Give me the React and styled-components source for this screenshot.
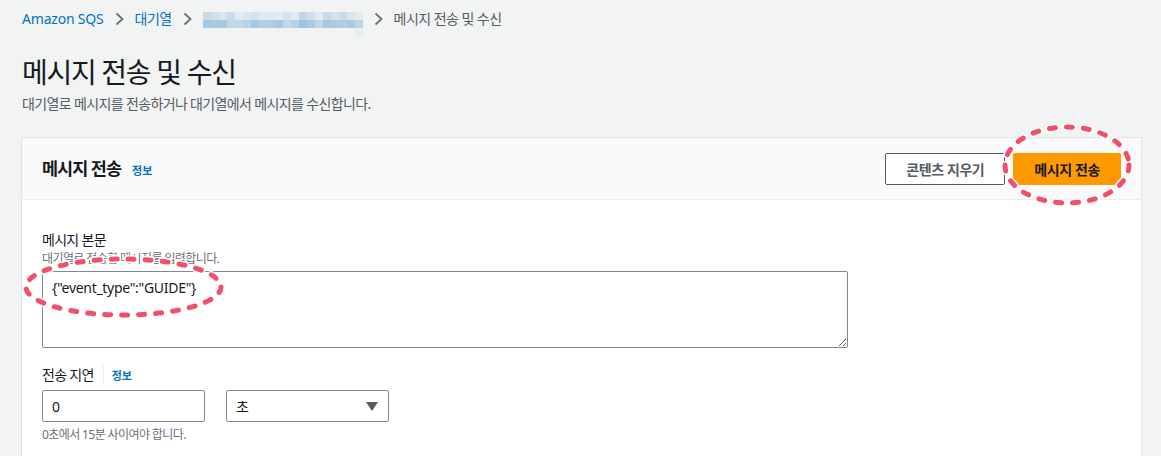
import React from "react";
import styled, { createGlobalStyle } from "styled-components";

const GlobalStyle = createGlobalStyle`
  html, body { margin: 0; padding: 0; }
  body {
    background: #f2f3f3;
    font-family: "Noto Sans", "Noto Sans CJK KR", sans-serif;
    color: #16191f;
    overflow: hidden;
  }
`;

const Page = styled.div`
  position: relative;
  width: 1161px;
  height: 456px;
  overflow: hidden;
  padding: 0 19px 0 21px;
  box-sizing: border-box;
`;

const Breadcrumbs = styled.nav`
  display: flex;
  align-items: center;
  height: 38px;
  padding-left: 1px;
  gap: 11px;
`;

const Crumb = styled.span`
  font-size: 14px;
  letter-spacing: ${(p) => (p.$latin ? "-0.2px" : "-0.55px")};
  color: ${(p) => (p.$current ? "#545b64" : "#0073bb")};
  line-height: 20px;
  white-space: nowrap;
`;

const Chevron = styled.svg`
  width: 9px;
  height: 14px;
  flex: none;
`;

const Blur = styled.span`
  position: relative;
  display: grid;
  grid-template-columns: repeat(20, 8px);
  grid-template-rows: 8px 8px;
  margin-top: 1px;
`;

const BlurCell = styled.span`
  background: ${(p) => p.$c};
`;

const BlurTail = styled.span`
  position: absolute;
  right: 0;
  top: 17px;
  width: 8px;
  height: 7px;
  background: #e6edf2;
`;

const PageHeader = styled.header`
  padding: 16px 0 0 1px;
`;

const Title = styled.h1`
  margin: 0;
  font-size: 28px;
  line-height: 36px;
  font-weight: 400;
  letter-spacing: -1.3px;
  color: #16191f;
`;

const Description = styled.p`
  margin: 4px 0 0;
  font-size: 14px;
  line-height: 20px;
  letter-spacing: -0.64px;
  color: #545b64;
`;

const Container = styled.section`
  margin-top: 23px;
  background: #ffffff;
  border: 1px solid #e1e4e4;
  min-height: 400px;
`;

const ContainerHeader = styled.div`
  display: flex;
  align-items: center;
  justify-content: space-between;
  height: 62px;
  padding: 0 20px 2px 20px;
  background: #fafafa;
  border-bottom: 1px solid #eaeded;
  box-sizing: border-box;
`;

const HeaderTitle = styled.h2`
  margin: 0;
  display: flex;
  align-items: baseline;
  gap: 11px;
  font-size: 17.5px;
  font-weight: 700;
  letter-spacing: -1px;
  color: #16191f;
`;

const InfoLink = styled.a`
  font-size: 11px;
  font-weight: 700;
  letter-spacing: 0;
  color: #0073bb;
  text-decoration: none;
`;

const Actions = styled.div`
  display: flex;
  gap: 8px;
  margin-top: 2px;
`;

const Button = styled.button`
  height: 32px;
  padding: 0 20px;
  border-radius: 2px;
  font-family: inherit;
  font-size: 14px;
  font-weight: 700;
  letter-spacing: -0.4px;
  cursor: pointer;
  border: 1px solid ${(p) => (p.$primary ? "#ff9900" : "#545b64")};
  background: ${(p) => (p.$primary ? "#ff9900" : "#ffffff")};
  color: ${(p) => (p.$primary ? "#16191f" : "#545b64")};
`;

const ContainerBody = styled.div`
  padding: 30px 20px 20px;
  display: flex;
  flex-direction: column;
  gap: 17px;
`;

const Field = styled.div`
  display: flex;
  flex-direction: column;
`;

const LabelRow = styled.div`
  display: flex;
  align-items: center;
  height: 20px;
`;

const Label = styled.label`
  font-size: 14px;
  line-height: 20px;
  letter-spacing: -0.7px;
  color: #16191f;
`;

const Divider = styled.span`
  width: 1px;
  height: 20px;
  background: #eaeded;
  margin: 0 8px 0 9px;
`;

const Hint = styled.div`
  font-size: 12px;
  line-height: 16px;
  letter-spacing: -0.6px;
  color: #687078;
  margin-top: ${(p) => p.$top || "0"};
`;

const TextArea = styled.textarea`
  margin-top: 4px;
  width: 806px;
  height: 77px;
  box-sizing: border-box;
  padding: 5px 9px;
  border: 1px solid #7d8998;
  border-radius: 2px;
  font-family: "Noto Sans", sans-serif;
  font-size: 14px;
  line-height: 22px;
  letter-spacing: -0.3px;
  color: #16191f;
  resize: both;
  outline: none;
`;

const Controls = styled.div`
  display: flex;
  gap: 21px;
  margin-top: 5px;
`;

const Input = styled.input`
  width: 163px;
  height: 32px;
  box-sizing: border-box;
  padding: 0 9px;
  border: 1px solid #7d8998;
  border-radius: 2px;
  font-family: "Noto Sans", sans-serif;
  font-size: 14px;
  color: #16191f;
  outline: none;
`;

const Select = styled.div`
  width: 163px;
  height: 32px;
  box-sizing: border-box;
  padding: 0 10px 0 9px;
  border: 1px solid #7d8998;
  border-radius: 2px;
  display: flex;
  align-items: center;
  justify-content: space-between;
  font-size: 14px;
  color: #16191f;
  background: #ffffff;
`;

const Caret = styled.svg`
  width: 12px;
  height: 9px;
`;

const Overlay = styled.svg`
  position: absolute;
  left: 0;
  top: 0;
  width: 1161px;
  height: 456px;
  pointer-events: none;
`;

const blurTop = [
  "#c7dbea", "#d0e1ec", "#d9e6ef", "#c9dcea", "#e2ebf1", "#dbe7ef", "#d6e3ed", "#dde8f0",
  "#dfe9f0", "#e4ecf2", "#d5e3ed", "#e1eaf1", "#bed6e8", "#cfe0ec", "#e1eaf1", "#c6daea",
  "#d3e2ed", "#c9dcea", "#dbe7ef", "#e3ebf1",
];
const blurBottom = [
  "#a6c8e2", "#a9cae3", "#a8c9e2", "#c0d7e8", "#c3d9e9", "#b9d3e7", "#a3c6e1", "#b3cfe5",
  "#aecce4", "#a9c9e2", "#c2d8e9", "#b7d2e6", "#9ec2df", "#aacae3", "#c0d7e8", "#a6c8e2",
  "#abcae3", "#b0cde4", "#a8c9e2", "#bcd5e7",
];

const ChevronIcon = () => (
  <Chevron viewBox="0 0 9 14">
    <polyline points="1.5,1.5 7.5,7 1.5,12.5" fill="none" stroke="#687078" strokeWidth="1.8" />
  </Chevron>
);

const DashedEllipse = ({ cx, cy, rx, ry }) => (
  <g>
    <ellipse cx={cx} cy={cy} rx={rx} ry={ry} fill="none" stroke="#ffffff" strokeWidth="8"
      strokeDasharray="6 11" strokeLinecap="round" />
    <ellipse cx={cx} cy={cy} rx={rx} ry={ry} fill="none" stroke="#f24f6c" strokeWidth="5"
      strokeDasharray="6 11" strokeLinecap="round" />
  </g>
);

export default function App() {
  return (
    <>
      <GlobalStyle />
      <Page>
        <Breadcrumbs>
          <Crumb $latin>Amazon SQS</Crumb>
          <ChevronIcon />
          <Crumb>대기열</Crumb>
          <ChevronIcon />
          <Blur>
            {blurTop.map((c, i) => (
              <BlurCell key={"t" + i} $c={c} />
            ))}
            {blurBottom.map((c, i) => (
              <BlurCell key={"b" + i} $c={c} />
            ))}
            <BlurTail />
          </Blur>
          <ChevronIcon />
          <Crumb $current>메시지 전송 및 수신</Crumb>
        </Breadcrumbs>

        <PageHeader>
          <Title>메시지 전송 및 수신</Title>
          <Description>대기열로 메시지를 전송하거나 대기열에서 메시지를 수신합니다.</Description>
        </PageHeader>

        <Container>
          <ContainerHeader>
            <HeaderTitle>
              메시지 전송
              <InfoLink>정보</InfoLink>
            </HeaderTitle>
            <Actions>
              <Button>콘텐츠 지우기</Button>
              <Button $primary>메시지 전송</Button>
            </Actions>
          </ContainerHeader>
          <ContainerBody>
            <Field>
              <LabelRow>
                <Label>메시지 본문</Label>
              </LabelRow>
              <Hint $top="1px">대기열로 전송할 메시지를 입력합니다.</Hint>
              <TextArea defaultValue={'{"event_type":"GUIDE"}'} />
            </Field>
            <Field>
              <LabelRow>
                <Label>전송 지연</Label>
                <Divider />
                <InfoLink>정보</InfoLink>
              </LabelRow>
              <Controls>
                <Input defaultValue="0" />
                <Select>
                  <span>초</span>
                  <Caret viewBox="0 0 12 9">
                    <polygon points="0,0 12,0 6,9" fill="#545b64" />
                  </Caret>
                </Select>
              </Controls>
              <Hint $top="5px">0초에서 15분 사이여야 합니다.</Hint>
            </Field>
          </ContainerBody>
        </Container>

        <Overlay viewBox="0 0 1161 456">
          <DashedEllipse cx={1067} cy={165} rx={62} ry={38} />
          <DashedEllipse cx={123.5} cy={287} rx={97.5} ry={28} />
        </Overlay>
      </Page>
    </>
  );
}
